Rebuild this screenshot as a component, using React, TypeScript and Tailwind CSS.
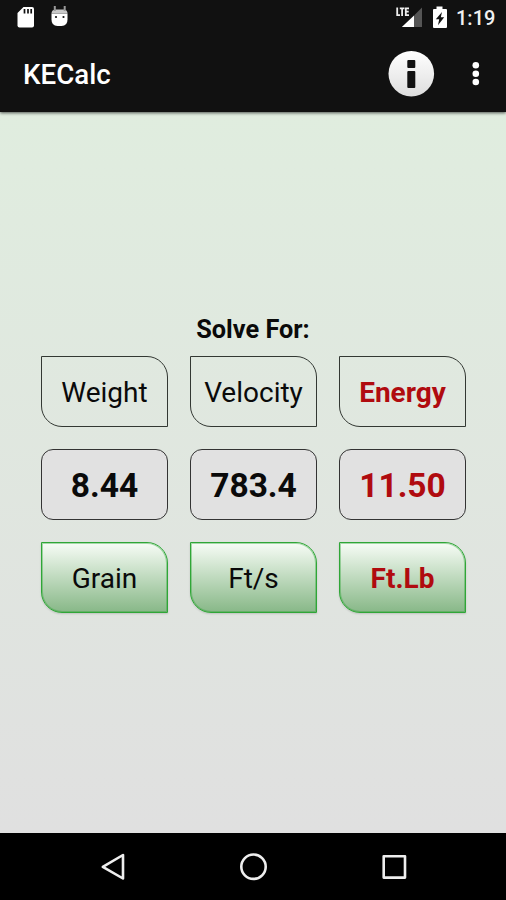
const columns = [
  { name: "Weight", value: "8.44", unit: "Grain", active: false },
  { name: "Velocity", value: "783.4", unit: "Ft/s", active: false },
  { name: "Energy", value: "11.50", unit: "Ft.Lb", active: true },
];

function StatusBar() {
  return (
    <div className="flex h-[36px] items-center justify-between">
      <svg width="80" height="36" viewBox="0 0 80 36">
        <path d="M23.500 7H32q2 0 2 2v16.500q0 2-2 2H19.500q-2 0-2-2V13z" fill="#fff" />
        <path d="M24.500 9v4.500M28 9v4.500M31.200 9v4.500" stroke="#111" strokeWidth="1.700" />
        <path d="M51.500 13.500h16v6q0 6.500-6 6.500h-4q-6 0-6-6.500z" fill="#fff" />
        <path d="M51.500 13.500q0-3.500 3.500-4h9q3.500.5 3.500 4z" fill="#c8c8c8" />
        <path d="M54.800 6v5M64.700 6v5" stroke="#999" strokeWidth="2" />
        <circle cx="56" cy="17" r="1.100" fill="#111" />
        <circle cx="63.500" cy="17" r="1.100" fill="#111" />
      </svg>
      <div className="flex items-center pr-[11px]">
        <svg width="66" height="36" viewBox="0 0 66 36">
          <path d="M24 15.500L32 7.500V27h-8z" fill="#555" />
          <path d="M24 15.500V27H11.800z" fill="#fff" />
          <path d="M7.200 7.500v7.700h2.800M9.800 8.300h4.600M12.100 8.300v7.600M19 8.300h-3.200v6.900H19M15.800 11.700h2.900" fill="none" stroke="#eee" strokeWidth="1.800" />
          <path d="M46.500 6.500h6V9H56q1 0 1 1v17q0 1-1 1H44q-1 0-1-1V10q0-1 1-1h2.500z" fill="#fff" />
          <path d="M52 12L45.800 19.200h3.400l-1.200 6 6.200-8h-3.400z" fill="#111" />
        </svg>
        <span className="w-[39px] text-[20px] leading-[36px] font-medium whitespace-nowrap text-[#f0f0f0]">1:19</span>
      </div>
    </div>
  );
}

function AppBar() {
  return (
    <div className="flex h-[76px] items-center pl-[23px]">
      <h1 className="grow pt-[2px] text-[27.700px] font-medium text-white">KECalc</h1>
      <svg width="118" height="76" viewBox="388 36 118 76">
        <defs>
          <linearGradient id="info" x1="0" y1="0" x2="0" y2="1">
            <stop offset="0" stopColor="#fff" />
            <stop offset="1" stopColor="#dedede" />
          </linearGradient>
        </defs>
        <circle cx="411.300" cy="73.700" r="22.800" fill="url(#info)" />
        <rect x="407.300" y="60" width="8" height="8" rx="1" fill="#111" />
        <rect x="407.300" y="71" width="8" height="17" rx="1" fill="#111" />
        <circle cx="475.800" cy="65.200" r="3.300" fill="#fff" />
        <circle cx="475.800" cy="73.700" r="3.300" fill="#fff" />
        <circle cx="475.800" cy="82" r="3.300" fill="#fff" />
      </svg>
    </div>
  );
}

export default function App() {
  return (
    <div className="flex h-[900px] w-[506px] flex-col overflow-hidden font-['Roboto',sans-serif] text-[#0a0a0a]">
      <header className="relative h-[112px] shrink-0 bg-[#111] shadow-[0_1px_3px_rgba(0,0,0,0.65)]">
        <StatusBar />
        <AppBar />
      </header>
      <main className="h-[721px] shrink-0 bg-linear-to-b from-[#e0eddf] to-[#e0e0e0] pt-[202px]">
        <h2 className="h-[42px] text-center text-[25.300px] leading-[32px] font-bold">Solve For:</h2>
        <div className="flex gap-[22px] pl-[41px]">
          {columns.map((c) => (
            <div key={c.name} className={`flex w-[127px] flex-col gap-[22px] text-center ${c.active ? "text-[#b00b0f]" : ""}`}>
              <button className={`h-[71px] rounded-tr-[21px] rounded-bl-[21px] border border-[#333833] pt-[2px] text-[28px] ${c.active ? "font-bold" : ""}`}>
                {c.name}
              </button>
              <div className="flex h-[71px] items-center justify-center rounded-[12px] border border-[#333] bg-[#e1e1e1] pt-[3px] text-[33.500px] font-bold">
                {c.value}
              </div>
              <button className={`h-[71px] rounded-tr-[21px] rounded-bl-[21px] border border-[#2fa637] bg-linear-to-b from-[#f7fcf6] to-[#88b888] pt-[2px] text-[28px] shadow-[inset_0_0_0_1px_rgba(47,166,55,0.4),0_1px_2px_rgba(0,0,0,0.15)] ${c.active ? "font-bold" : ""}`}>
                {c.unit}
              </button>
            </div>
          ))}
        </div>
      </main>
      <nav className="h-[67px] shrink-0 bg-black">
        <svg width="506" height="67" viewBox="0 833 506 67" fill="none" stroke="#eee" strokeWidth="2.600" strokeLinejoin="round">
          <path d="M123 855v23.500L102.800 866.800z" />
          <circle cx="253.500" cy="866.700" r="12.200" />
          <rect x="383.700" y="856.300" width="21.300" height="21.300" />
        </svg>
      </nav>
    </div>
  );
}
